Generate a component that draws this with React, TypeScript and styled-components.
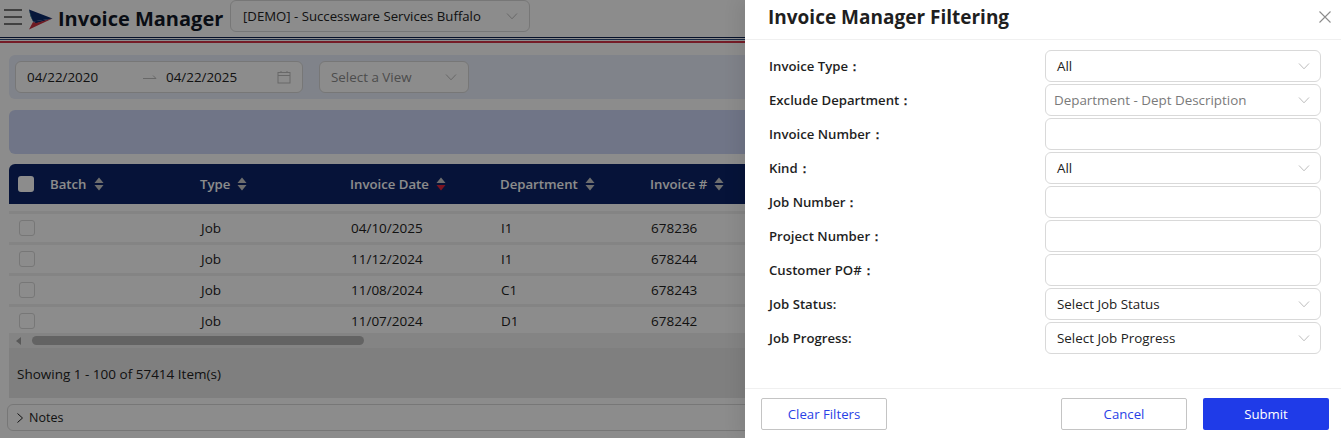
import React from 'react';
import styled, { createGlobalStyle } from 'styled-components';

const GlobalStyle = createGlobalStyle`
  html, body {
    margin: 0;
    padding: 0;
    background: #ffffff;
    font-family: "Open Sans", "Noto Sans", sans-serif;
  }
  * {
    box-sizing: border-box;
  }
`;

const COLUMNS = ['Batch', 'Type', 'Invoice Date', 'Department', 'Invoice #'];

const ROWS = [
  ['', 'Job', '04/10/2025', 'I1', '678236'],
  ['', 'Job', '11/12/2024', 'I1', '678244'],
  ['', 'Job', '11/08/2024', 'C1', '678243'],
  ['', 'Job', '11/07/2024', 'D1', '678242'],
];

const FILTERS = [
  { label: 'Invoice Type：', kind: 'select', value: 'All' },
  { label: 'Exclude Department：', kind: 'placeholder', value: 'Department - Dept Description' },
  { label: 'Invoice Number：', kind: 'input' },
  { label: 'Kind：', kind: 'select', value: 'All' },
  { label: 'Job Number：', kind: 'input' },
  { label: 'Project Number：', kind: 'input' },
  { label: 'Customer PO#：', kind: 'input' },
  { label: 'Job Status:', kind: 'select', value: 'Select Job Status' },
  { label: 'Job Progress:', kind: 'select', value: 'Select Job Progress' },
];

const Chevron: React.FC = () => (
  <svg width="12" height="12" viewBox="0 0 12 12" fill="none">
    <path d="M1 3.5 L6 8.8 L11 3.5" stroke="#bdbdbd" strokeWidth="1" />
  </svg>
);

const SortIcon: React.FC<{ active?: boolean }> = ({ active }) => (
  <svg width="10" height="14" viewBox="0 0 10 14">
    <path d="M5 0.5 L9.5 6 H0.5 Z" fill="#c9c9c9" />
    <path d="M0.5 8 H9.5 L5 13.5 Z" fill={active ? '#e0243c' : '#c9c9c9'} />
  </svg>
);

const Logo: React.FC = () => (
  <svg width="25" height="21" viewBox="0 0 25 21">
    <path d="M1 0.5 L24.5 9.5 L5 12.5 L2.5 7 Z" fill="#0b2a6b" />
    <path d="M1 0.5 L5 12.5 L2.5 7 Z" fill="#3a8f9a" />
    <path d="M5 12.5 L24.5 9.5 L8 14.5 Z" fill="#0b2a6b" />
    <path d="M24.5 9.5 L8 14 L5 13 L1 20.5 Z" fill="#c8303f" />
  </svg>
);

const App: React.FC = () => (
  <>
    <GlobalStyle />
    <Screen>
      <Page>
        <TopBar>
          <Hamburger>
            <span />
            <span />
            <span />
          </Hamburger>
          <LogoSlot>
            <Logo />
          </LogoSlot>
          <AppTitle>Invoice Manager</AppTitle>
          <CompanySelect>
            <span>[DEMO] - Successware Services Buffalo</span>
            <Chevron />
          </CompanySelect>
        </TopBar>
        <Stripes />
        <FilterBar>
          <DateRange>
            <DateText>04/22/2020</DateText>
            <Arrow>
              <svg width="14" height="6" viewBox="0 0 14 6" fill="none" stroke="#bdbdbd">
                <path d="M0 4.5 H13 L10 1.5" />
              </svg>
            </Arrow>
            <span>04/22/2025</span>
            <CalendarSlot>
              <svg width="14" height="14" viewBox="0 0 14 14" fill="none" stroke="#bdbdbd">
                <rect x="1" y="2.5" width="12" height="10.5" />
                <path d="M1 5.5 H13 M4 1 V3 M10 1 V3" />
              </svg>
            </CalendarSlot>
          </DateRange>
          <ViewSelect>
            <span>Select a View</span>
            <Chevron />
          </ViewSelect>
        </FilterBar>
        <Banner />
        <TableHead>
          <HeadCheck />
          {COLUMNS.map((name) => (
            <HeadCell key={name}>
              {name}
              <SortIcon active={name === 'Invoice Date'} />
            </HeadCell>
          ))}
        </TableHead>
        <TableBody>
          {ROWS.map((row) => (
            <Row key={row[4]}>
              <RowCheck />
              {row.map((cell, i) => (
                <Cell key={i}>{cell}</Cell>
              ))}
            </Row>
          ))}
        </TableBody>
        <ScrollTrack>
          <ScrollArrow />
          <ScrollThumb />
        </ScrollTrack>
        <TableFooter>Showing 1 - 100 of 57414 Item(s)</TableFooter>
        <Notes>
          <svg width="10" height="10" viewBox="0 0 10 10" fill="none" stroke="#222">
            <path d="M2.5 0.5 L7.5 5 L2.5 9.5" />
          </svg>
          Notes
        </Notes>
      </Page>
      <Overlay />
      <Drawer>
        <DrawerHeader>
          <DrawerTitle>Invoice Manager Filtering</DrawerTitle>
          <svg width="14" height="14" viewBox="0 0 14 14" stroke="#8c8c8c" strokeWidth="1.1">
            <path d="M1.5 1.5 L12.5 12.5 M12.5 1.5 L1.5 12.5" />
          </svg>
        </DrawerHeader>
        <DrawerBody>
          {FILTERS.map((f) => (
            <FieldRow key={f.label}>
              <FieldLabel>{f.label}</FieldLabel>
              <Control $placeholder={f.kind === 'placeholder'}>
                {f.value && <span>{f.value}</span>}
                {f.kind !== 'input' && <Chevron />}
              </Control>
            </FieldRow>
          ))}
        </DrawerBody>
        <DrawerFooter>
          <GhostButton>Clear Filters</GhostButton>
          <FooterActions>
            <GhostButton>Cancel</GhostButton>
            <PrimaryButton>Submit</PrimaryButton>
          </FooterActions>
        </DrawerFooter>
      </Drawer>
    </Screen>
  </>
);

export default App;

const Screen = styled.div`
  position: relative;
  width: 1341px;
  height: 438px;
  overflow: hidden;
`;

const Page = styled.div`
  width: 1341px;
  height: 438px;
  background: #ffffff;
  color: #222222;
  font-size: 13.5px;
`;

const TopBar = styled.div`
  display: flex;
  align-items: flex-start;
  height: 37px;
  padding-left: 4px;
`;

const Hamburger = styled.div`
  display: flex;
  flex-direction: column;
  justify-content: space-between;
  width: 18px;
  height: 16px;
  margin-top: 9px;
  span {
    height: 2px;
    background: #777777;
  }
`;

const LogoSlot = styled.div`
  display: flex;
  margin: 9px 0 0 6px;
  width: 30px;
`;

const AppTitle = styled.div`
  font-size: 20px;
  line-height: 37px;
  font-weight: 700;
  color: #111827;
  width: 172px;
`;

const selectBox = `
  display: flex;
  align-items: center;
  justify-content: space-between;
  background: #ffffff;
  border: 1px solid #d9d9d9;
  border-radius: 6px;
  font-size: 13.4px;
`;

const CompanySelect = styled.div`
  ${selectBox}
  width: 300px;
  height: 32px;
  padding: 0 11px 0 12px;
  font-size: 13.2px;
`;

const Stripes = styled.div`
  height: 6px;
  background: linear-gradient(
    #0b1f4d 0,
    #0b1f4d 1px,
    #ffffff 1px,
    #ffffff 2px,
    #2c4a7c 2px,
    #2c4a7c 3px,
    #ffffff 3px,
    #ffffff 4px,
    #d63447 4px,
    #d63447 6px
  );
`;

const FilterBar = styled.div`
  display: flex;
  gap: 16px;
  align-items: center;
  height: 44px;
  margin: 12px 0 0 9px;
  padding-left: 6px;
  background: #e9eefb;
  border-radius: 6px 0 0 6px;
`;

const DateRange = styled.div`
  ${selectBox}
  justify-content: flex-start;
  width: 288px;
  height: 32px;
  padding: 0 11px;
`;

const DateText = styled.span`
  width: 116px;
`;

const Arrow = styled.span`
  display: flex;
  width: 23px;
`;

const CalendarSlot = styled.span`
  display: flex;
  margin-left: auto;
`;

const ViewSelect = styled.div`
  ${selectBox}
  width: 150px;
  height: 32px;
  padding: 0 11px;
  color: #8c8c8c;
`;

const Banner = styled.div`
  height: 44px;
  margin: 11px 0 0 9px;
  background: #ccd6f6;
  border-radius: 6px 0 0 6px;
`;

const TableHead = styled.div`
  display: grid;
  grid-template-columns: 41px repeat(5, 150px);
  align-items: center;
  height: 40px;
  margin: 10px 0 0 9px;
  background: #0b2468;
  border-radius: 6px 0 0 0;
  color: #ffffff;
  font-size: 13.2px;
  font-weight: 600;
`;

const HeadCheck = styled.span`
  width: 16px;
  height: 16px;
  margin-left: 9px;
  background: #ffffff;
  border-radius: 3px;
`;

const HeadCell = styled.div`
  display: flex;
  align-items: center;
  gap: 7px;
`;

const TableBody = styled.div`
  height: 122px;
  margin: 7px 0 0 9px;
  overflow: hidden;
`;

const Row = styled.div`
  display: grid;
  grid-template-columns: 41px repeat(5, 150px);
  align-items: center;
  height: 31px;
  border-top: 3px solid #f0f0f0;
`;

const RowCheck = styled.span`
  width: 16px;
  height: 16px;
  margin-left: 10px;
  border: 1px solid #d9d9d9;
  border-radius: 3px;
`;

const Cell = styled.div`
  padding-left: 1px;
`;

const ScrollTrack = styled.div`
  display: flex;
  align-items: center;
  height: 15px;
  margin-left: 9px;
  background: #f1f1f1;
`;

const ScrollArrow = styled.span`
  width: 0;
  height: 0;
  margin-left: 7px;
  border-top: 4px solid transparent;
  border-bottom: 4px solid transparent;
  border-right: 5px solid #a3a3a3;
`;

const ScrollThumb = styled.div`
  width: 332px;
  height: 9px;
  margin-left: 11px;
  background: #b5b5b5;
  border-radius: 5px;
`;

const TableFooter = styled.div`
  display: flex;
  align-items: center;
  height: 50px;
  margin-left: 9px;
  padding: 2px 0 0 8px;
  background: #e8e8e8;
`;

const Notes = styled.div`
  display: flex;
  align-items: center;
  gap: 4px;
  height: 27px;
  margin: 6px 0 0 7px;
  padding-left: 7px;
  border: 1px solid #d9d9d9;
  border-radius: 6px 0 0 6px;
  font-size: 12.5px;
`;

const Overlay = styled.div`
  position: absolute;
  inset: 0;
  background: rgba(0, 0, 0, 0.45);
`;

const Drawer = styled.aside`
  position: absolute;
  top: 0;
  right: 0;
  bottom: 0;
  width: 596px;
  display: flex;
  flex-direction: column;
  background: #ffffff;
  box-shadow: -6px 0 16px rgba(0, 0, 0, 0.08);
  color: #1f1f1f;
`;

const DrawerHeader = styled.div`
  display: flex;
  align-items: center;
  justify-content: space-between;
  height: 40px;
  padding: 0 9px 6px 23px;
  border-bottom: 1px solid #f0f0f0;
`;

const DrawerTitle = styled.div`
  font-size: 19px;
  font-weight: 700;
`;

const DrawerBody = styled.div`
  flex: 1;
  display: flex;
  flex-direction: column;
  gap: 2px;
  padding: 10px 20px 0 24px;
`;

const FieldRow = styled.div`
  display: grid;
  grid-template-columns: 276px 276px;
  align-items: center;
`;

const FieldLabel = styled.div`
  font-size: 13.2px;
  font-weight: 600;
`;

const Control = styled.div<{ $placeholder?: boolean }>`
  ${selectBox}
  height: 32px;
  padding: 0 10px 0 ${(p) => (p.$placeholder ? '8px' : '11px')};
  color: ${(p) => (p.$placeholder ? '#7a7a7a' : '#222222')};
`;

const DrawerFooter = styled.div`
  display: flex;
  align-items: center;
  justify-content: space-between;
  height: 50px;
  padding: 0 12px 0 16px;
  border-top: 1px solid #f0f0f0;
`;

const FooterActions = styled.div`
  display: flex;
  gap: 16px;
`;

const GhostButton = styled.button`
  width: 126px;
  height: 32px;
  background: #ffffff;
  border: 1px solid #c4c4c4;
  border-radius: 2px;
  color: #2a3fe6;
  font: inherit;
  font-size: 13.2px;
`;

const PrimaryButton = styled.button`
  width: 126px;
  height: 32px;
  background: #1f3be8;
  border: none;
  border-radius: 2px;
  color: #ffffff;
  font: inherit;
  font-size: 13.2px;
`;
